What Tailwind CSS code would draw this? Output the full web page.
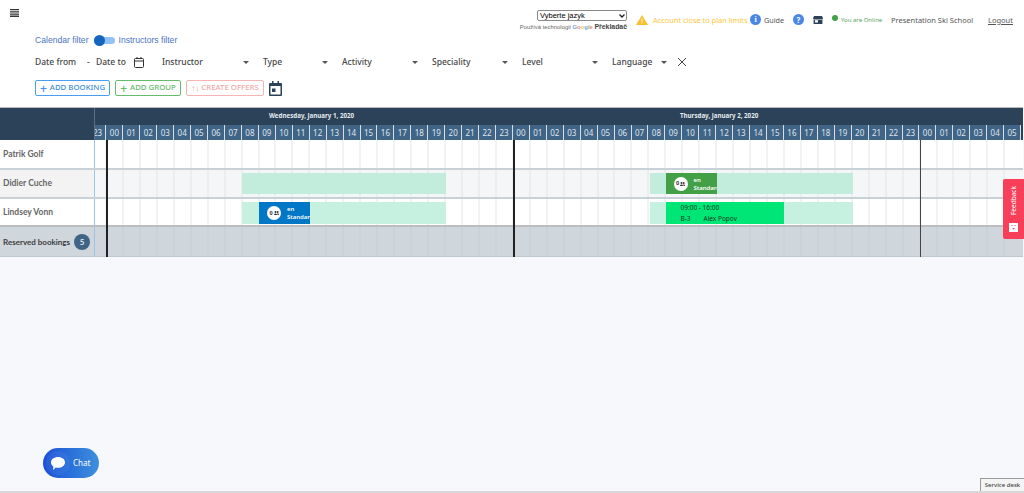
<!DOCTYPE html>
<html><head><meta charset="utf-8"><script src="https://cdn.jsdelivr.net/npm/@tailwindcss/browser@4"></script></head>
<body class="m-0 h-[493px] w-[1024px] overflow-hidden bg-[#f6f8fc] font-['Noto_Sans',sans-serif] relative">
<header class="h-[107px] bg-white flex flex-col">
  <div class="h-[33px] flex items-start justify-between">
    <svg class="ml-[10px] mt-[9px]" width="9" height="8" viewBox="0 0 9 8"><path d="M0 0h9v1.3H0zM0 2.2h9v1.3H0zM0 4.4h9v1.3H0zM0 6.6h9V8H0z" fill="#333"/></svg>
    <div class="flex items-start mr-[12px]">
      <div class="w-[90px] mt-[10px] flex flex-col items-end">
        <div class="relative w-[90px] h-[11px]">
          <select class="block w-[90px] h-[11px] p-0 pl-[2px] border border-[#8a8a8a] rounded-[2px] text-[7.500px] leading-[9px] text-black font-['Liberation_Sans',sans-serif] appearance-none bg-white"><option>Vyberte jazyk</option></select>
          <svg class="absolute right-[2px] top-[3.500px]" width="6" height="4" viewBox="0 0 6 4" fill="none" stroke="#222" stroke-width="1.300"><path d="M.5.500L3 3l2.500-2.500"/></svg>
        </div>
        <div class="text-[5.900px] leading-[8px] whitespace-nowrap font-['Liberation_Sans',sans-serif] text-[#666] mt-[2px]">Používá technologii <span class="font-bold text-[#7b9ee0]">G<span class="text-[#e58a80]">o</span><span class="text-[#eec35a]">o</span>g<span class="text-[#7cc08a]">l</span><span class="text-[#e58a80]">e</span></span> <span class="text-[#444] text-[6.900px] font-bold">Překladač</span></div>
      </div>
      <svg class="ml-[9px] mt-[15px]" width="12" height="10" viewBox="0 0 12 10"><path d="M6 0l6 10H0z" fill="#fbc02d"/><path d="M5.500 3.500h1v3h-1zM5.500 7.300h1v1h-1z" fill="#fff"/></svg>
      <span class="ml-[5px] mt-[14px] w-[93px] text-[7.400px] leading-[12px] text-[#fdc838] whitespace-nowrap">Account close to plan limits</span>
      <span class="ml-[4px] mt-[14px] w-[11px] h-[11px] rounded-full bg-[#4a86e8] text-white text-[8px] leading-[11px] font-bold text-center font-['Liberation_Serif',serif]">i</span>
      <span class="ml-[3px] mt-[14px] w-[20px] text-[7.200px] leading-[12px] text-[#555]">Guide</span>
      <span class="ml-[9px] mt-[14px] w-[11px] h-[11px] rounded-full bg-[#4a86e8] text-white text-[8px] leading-[11px] font-bold text-center">?</span>
      <svg class="ml-[9px] mt-[16px]" width="10" height="8" viewBox="0 0 10 8"><path d="M1 0h8l1 2.500a1.200 1.200 0 0 1-.6 1V8H.6V3.500A1.200 1.200 0 0 1 0 2.500z" fill="#2b4259"/><path d="M2 4.200h3V6.500H2z" fill="#fff"/><path d="M0 3.200h10v.5H0z" fill="#fff"/></svg>
      <span class="ml-[9px] mt-[15px] w-[6px] h-[6px] rounded-full bg-[#43a047]"></span>
      <span class="ml-[3px] mt-[15px] w-[42px] text-[6px] leading-[10px] text-[#5aa662] whitespace-nowrap">You are Online</span>
      <span class="ml-[8px] mt-[14px] w-[82px] text-[7.500px] leading-[12px] text-[#555] whitespace-nowrap">Presentation Ski School</span>
      <span class="ml-[15px] mt-[14px] w-[24px] text-[7.500px] leading-[12px] text-[#555] underline">Logout</span>
    </div>
  </div>
  <div class="h-[15px] pl-[35px] flex items-center text-[8.600px] text-[#4a75c4] font-['Liberation_Sans',sans-serif]">
    <span>Calendar filter</span>
    <span class="relative ml-[5px] w-[21px] h-[7px] rounded-full bg-[#90c2f5]"><span class="absolute left-0 top-[-2px] w-[11px] h-[11px] rounded-full bg-[#1565c0]"></span></span>
    <span class="ml-[4px]">Instructors filter</span>
  </div>
  <div class="h-[16px] mt-[6px] pl-[35px] flex items-center text-[8.500px] text-[#444] font-medium whitespace-nowrap">
    <span class="w-[52px]">Date from</span><span class="w-[9px]">-</span><span class="w-[38px]">Date to</span>
    <svg width="10" height="11" viewBox="0 0 10 11" fill="none" stroke="#333" stroke-width="1"><rect x=".5" y="1.500" width="9" height="9" rx="1"/><path d="M.5 4h9M3 0v2M7 0v2"/></svg>
    <span class="ml-[18px] w-[81px]">Instructor</span><svg width="6" height="3" viewBox="0 0 6 3"><path d="M0 0h6L3 3z" fill="#555"/></svg>
    <span class="ml-[14px] w-[59px]">Type</span><svg width="6" height="3" viewBox="0 0 6 3"><path d="M0 0h6L3 3z" fill="#555"/></svg>
    <span class="ml-[14px] w-[70px]">Activity</span><svg width="6" height="3" viewBox="0 0 6 3"><path d="M0 0h6L3 3z" fill="#555"/></svg>
    <span class="ml-[14px] w-[70px]">Speciality</span><svg width="6" height="3" viewBox="0 0 6 3"><path d="M0 0h6L3 3z" fill="#555"/></svg>
    <span class="ml-[14px] w-[70px]">Level</span><svg width="6" height="3" viewBox="0 0 6 3"><path d="M0 0h6L3 3z" fill="#555"/></svg>
    <span class="ml-[14px] w-[49px]">Language</span><svg width="6" height="3" viewBox="0 0 6 3"><path d="M0 0h6L3 3z" fill="#555"/></svg>
    <svg class="ml-[11px]" width="8" height="8" viewBox="0 0 8 8" stroke="#444" stroke-width="1"><path d="M0 0l8 8M8 0L0 8"/></svg>
  </div>
  <div class="mt-[10px] pl-[35px] flex items-center gap-[5px] text-[7.800px] font-medium whitespace-nowrap">
    <span class="w-[75px] h-[16px] border border-[#4a9ef0] rounded-[2px] text-[#3f8fe0] flex items-center justify-center gap-[3px]"><span class="text-[12px] leading-[11px]">+</span>ADD BOOKING</span>
    <span class="w-[66px] h-[16px] border border-[#66bb6a] rounded-[2px] text-[#66bb6a] flex items-center justify-center gap-[3px]"><span class="text-[12px] leading-[11px]">+</span>ADD GROUP</span>
    <span class="w-[78px] h-[16px] border border-[#f5b5b5] rounded-[2px] text-[#f3a8a8] flex items-center justify-center gap-[2px]"><span class="text-[8px] leading-[8px]">↑↓</span>CREATE OFFERS</span>
    <svg width="13" height="15" viewBox="0 0 13 15"><path d="M1 2h11a1 1 0 0 1 1 1v11a1 1 0 0 1-1 1H1a1 1 0 0 1-1-1V3a1 1 0 0 1 1-1z" fill="#2b4259"/><path d="M3 0h1.500v3H3zM8.500 0H10v3H8.500z" fill="#2b4259"/><path d="M1.500 5h10v8.500h-10z" fill="#fff"/><path d="M3 7.500h3.500V11H3z" fill="#2b4259"/></svg>
  </div>
</header>
<main class="relative w-[1023px] border-t border-[#bbb]">
  <div class="flex h-[32px]">
    <div class="w-[94px] shrink-0 bg-[#2b4259]"></div>
    <div class="flex-1 overflow-hidden border-l border-[#5a7185] flex flex-col bg-[#2b4259]">
      <div class="h-[17px] relative text-[6.200px] leading-[16px] font-bold text-[#e6ebef]">
        <span class="absolute left-[174px] whitespace-nowrap">Wednesday, January 1, 2020</span>
        <span class="absolute left-[585px] whitespace-nowrap">Thursday, January 2, 2020</span>
      </div>
      <div class="ml-[-5.500px] flex h-[15px] w-[950px] text-[8px] leading-[15px] text-[#dfe6ec] text-center">
        <span class="w-[16.950px] shrink-0 bg-[#406486] border-r border-[#d7dee4]">23</span><span class="w-[16.950px] shrink-0 bg-[#406486] border-r border-[#d7dee4]">00</span><span class="w-[16.950px] shrink-0 bg-[#406486] border-r border-[#d7dee4]">01</span><span class="w-[16.950px] shrink-0 bg-[#406486] border-r border-[#d7dee4]">02</span><span class="w-[16.950px] shrink-0 bg-[#406486] border-r border-[#d7dee4]">03</span><span class="w-[16.950px] shrink-0 bg-[#406486] border-r border-[#d7dee4]">04</span><span class="w-[16.950px] shrink-0 bg-[#406486] border-r border-[#d7dee4]">05</span><span class="w-[16.950px] shrink-0 bg-[#406486] border-r border-[#d7dee4]">06</span><span class="w-[16.950px] shrink-0 bg-[#406486] border-r border-[#d7dee4]">07</span><span class="w-[16.950px] shrink-0 bg-[#406486] border-r border-[#d7dee4]">08</span><span class="w-[16.950px] shrink-0 bg-[#406486] border-r border-[#d7dee4]">09</span><span class="w-[16.950px] shrink-0 bg-[#406486] border-r border-[#d7dee4]">10</span><span class="w-[16.950px] shrink-0 bg-[#406486] border-r border-[#d7dee4]">11</span><span class="w-[16.950px] shrink-0 bg-[#406486] border-r border-[#d7dee4]">12</span><span class="w-[16.950px] shrink-0 bg-[#406486] border-r border-[#d7dee4]">13</span><span class="w-[16.950px] shrink-0 bg-[#406486] border-r border-[#d7dee4]">14</span><span class="w-[16.950px] shrink-0 bg-[#406486] border-r border-[#d7dee4]">15</span><span class="w-[16.950px] shrink-0 bg-[#406486] border-r border-[#d7dee4]">16</span><span class="w-[16.950px] shrink-0 bg-[#406486] border-r border-[#d7dee4]">17</span><span class="w-[16.950px] shrink-0 bg-[#406486] border-r border-[#d7dee4]">18</span><span class="w-[16.950px] shrink-0 bg-[#406486] border-r border-[#d7dee4]">19</span><span class="w-[16.950px] shrink-0 bg-[#406486] border-r border-[#d7dee4]">20</span><span class="w-[16.950px] shrink-0 bg-[#406486] border-r border-[#d7dee4]">21</span><span class="w-[16.950px] shrink-0 bg-[#406486] border-r border-[#d7dee4]">22</span><span class="w-[16.950px] shrink-0 bg-[#406486] border-r border-[#d7dee4]">23</span><span class="w-[16.950px] shrink-0 bg-[#406486] border-r border-[#d7dee4]">00</span><span class="w-[16.950px] shrink-0 bg-[#406486] border-r border-[#d7dee4]">01</span><span class="w-[16.950px] shrink-0 bg-[#406486] border-r border-[#d7dee4]">02</span><span class="w-[16.950px] shrink-0 bg-[#406486] border-r border-[#d7dee4]">03</span><span class="w-[16.950px] shrink-0 bg-[#406486] border-r border-[#d7dee4]">04</span><span class="w-[16.950px] shrink-0 bg-[#406486] border-r border-[#d7dee4]">05</span><span class="w-[16.950px] shrink-0 bg-[#406486] border-r border-[#d7dee4]">06</span><span class="w-[16.950px] shrink-0 bg-[#406486] border-r border-[#d7dee4]">07</span><span class="w-[16.950px] shrink-0 bg-[#406486] border-r border-[#d7dee4]">08</span><span class="w-[16.950px] shrink-0 bg-[#406486] border-r border-[#d7dee4]">09</span><span class="w-[16.950px] shrink-0 bg-[#406486] border-r border-[#d7dee4]">10</span><span class="w-[16.950px] shrink-0 bg-[#406486] border-r border-[#d7dee4]">11</span><span class="w-[16.950px] shrink-0 bg-[#406486] border-r border-[#d7dee4]">12</span><span class="w-[16.950px] shrink-0 bg-[#406486] border-r border-[#d7dee4]">13</span><span class="w-[16.950px] shrink-0 bg-[#406486] border-r border-[#d7dee4]">14</span><span class="w-[16.950px] shrink-0 bg-[#406486] border-r border-[#d7dee4]">15</span><span class="w-[16.950px] shrink-0 bg-[#406486] border-r border-[#d7dee4]">16</span><span class="w-[16.950px] shrink-0 bg-[#406486] border-r border-[#d7dee4]">17</span><span class="w-[16.950px] shrink-0 bg-[#406486] border-r border-[#d7dee4]">18</span><span class="w-[16.950px] shrink-0 bg-[#406486] border-r border-[#d7dee4]">19</span><span class="w-[16.950px] shrink-0 bg-[#406486] border-r border-[#d7dee4]">20</span><span class="w-[16.950px] shrink-0 bg-[#406486] border-r border-[#d7dee4]">21</span><span class="w-[16.950px] shrink-0 bg-[#406486] border-r border-[#d7dee4]">22</span><span class="w-[16.950px] shrink-0 bg-[#406486] border-r border-[#d7dee4]">23</span><span class="w-[16.950px] shrink-0 bg-[#406486] border-r border-[#d7dee4]">00</span><span class="w-[16.950px] shrink-0 bg-[#406486] border-r border-[#d7dee4]">01</span><span class="w-[16.950px] shrink-0 bg-[#406486] border-r border-[#d7dee4]">02</span><span class="w-[16.950px] shrink-0 bg-[#406486] border-r border-[#d7dee4]">03</span><span class="w-[16.950px] shrink-0 bg-[#406486] border-r border-[#d7dee4]">04</span><span class="w-[16.950px] shrink-0 bg-[#406486] border-r border-[#d7dee4]">05</span>
      </div>
    </div>
  </div>
  <div class="flex h-[30px] bg-white border-b-2 border-[#c9d1d8]">
    <div class="w-[94px] shrink-0 pl-[3px] flex items-center text-[8.500px] text-[#666] font-['Lato',sans-serif] font-bold">Patrik Golf</div>
    <div class="flex-1 border-l border-[#9cc4e8] bg-[repeating-linear-gradient(90deg,transparent_0,transparent_15.950px,#e2e4e6_15.950px,#e2e4e6_16.950px)] bg-[position:-5.500px_0]"></div>
  </div>
  <div class="flex h-[29px] bg-[#f3f3f3] border-b-2 border-[#c9d1d8]">
    <div class="w-[94px] shrink-0 pl-[3px] flex items-center text-[8.500px] text-[#666] font-['Lato',sans-serif] font-bold">Didier Cuche</div>
    <div class="flex-1 relative border-l border-[#9cc4e8] bg-[#f5f6f8] bg-[repeating-linear-gradient(90deg,transparent_0,transparent_15.950px,#e2e4e6_15.950px,#e2e4e6_16.950px)] bg-[position:-5.500px_0]">
      <div class="absolute left-[146.500px] top-[3px] w-[204px] h-[21px] bg-[#c2eddc]"></div>
      <div class="absolute left-[554.500px] top-[3px] w-[203px] h-[21px] bg-[#c2eddc]"></div>
      <div class="absolute left-[570.500px] top-[3px] w-[51px] h-[21px] bg-[#43a047] flex items-center overflow-hidden text-white">
        <span class="ml-[8px] w-[14px] h-[14px] rounded-full bg-white shrink-0 text-[#333] text-[5.500px] font-bold flex items-center justify-center gap-[1px]">0<svg width="5" height="4" viewBox="0 0 5 4" fill="#333"><circle cx="1.500" cy="1" r="1"/><circle cx="3.700" cy="1" r=".9"/><path d="M0 4c0-2 3-2 3 0zM3.400 2.300c1 0 1.600.6 1.600 1.700H3.500z"/></svg></span>
        <span class="ml-[6px] text-[6px] leading-[8px] font-semibold whitespace-nowrap">en<br>Standard</span>
      </div>
    </div>
  </div>
  <div class="flex h-[28px] bg-white border-b-2 border-[#bdbdbd]">
    <div class="w-[94px] shrink-0 pl-[3px] flex items-center text-[8.500px] text-[#666] font-['Lato',sans-serif] font-bold">Lindsey Vonn</div>
    <div class="flex-1 relative border-l border-[#9cc4e8] bg-[repeating-linear-gradient(90deg,transparent_0,transparent_15.950px,#e2e4e6_15.950px,#e2e4e6_16.950px)] bg-[position:-5.500px_0]">
      <div class="absolute left-[146.500px] top-[3px] w-[204px] h-[22px] bg-[#c6f1e0]"></div>
      <div class="absolute left-[554.500px] top-[3px] w-[203px] h-[22px] bg-[#c6f1e0]"></div>
      <div class="absolute left-[164px] top-[3px] w-[51px] h-[22px] bg-[#0277c6] flex items-center overflow-hidden text-white">
        <span class="ml-[8px] w-[14px] h-[14px] rounded-full bg-white shrink-0 text-[#333] text-[5.500px] font-bold flex items-center justify-center gap-[1px]">0<svg width="5" height="4" viewBox="0 0 5 4" fill="#333"><circle cx="1.500" cy="1" r="1"/><circle cx="3.700" cy="1" r=".9"/><path d="M0 4c0-2 3-2 3 0zM3.400 2.300c1 0 1.600.6 1.600 1.700H3.500z"/></svg></span>
        <span class="ml-[6px] text-[6px] leading-[8px] font-semibold whitespace-nowrap">en<br>Standard</span>
      </div>
      <div class="absolute left-[570.500px] top-[3px] w-[118px] h-[22px] bg-[#00e676] text-[6.500px] leading-[11px] text-[#0b3a1e] pl-[15px]">
        <div>09:00 - 16:00</div>
        <div class="flex"><span class="w-[23px]">B-3</span><span>Alex Popov</span></div>
      </div>
    </div>
  </div>
  <div class="flex h-[30px] bg-[#cfd6dc] border-b border-[#bfc7ce]">
    <div class="w-[94px] shrink-0 pl-[3px] flex items-center gap-[4px] text-[8px] text-[#3c3c3c] font-['Lato',sans-serif] font-bold whitespace-nowrap">Reserved bookings<span class="w-[16px] h-[16px] rounded-full bg-[#406486] text-[#e6ebef] text-[8px] leading-[16px] text-center shrink-0">5</span></div>
    <div class="flex-1 border-l border-[#9cc4e8] bg-[repeating-linear-gradient(90deg,transparent_0,transparent_15.950px,#c6ced4_15.950px,#c6ced4_16.950px)] bg-[position:-5.500px_0]"></div>
  </div>
  <div class="absolute left-[106px] top-[32px] w-[1.500px] h-[117px] bg-[#222]"></div>
  <div class="absolute left-[513px] top-[32px] w-[1.500px] h-[117px] bg-[#222]"></div>
  <div class="absolute left-[919.500px] top-[32px] w-[1.500px] h-[117px] bg-[#444]"></div>
</main>
<div class="absolute right-0 top-[179px] w-[21px] h-[60px] bg-[#f73f5a] rounded-l-[2px] flex flex-col items-center text-white">
  <span class="mt-[4px] h-[36px] text-[6.500px] leading-[21px] [writing-mode:vertical-rl] rotate-180 text-center">Feedback</span>
  <svg class="mt-[4px]" width="9" height="9" viewBox="0 0 9 9"><path d="M0 0h9v9H0z" fill="#fff"/><path d="M2.500 2h1v1h-1zM5.500 2h1v1h-1zM3 5h3L4.500 6.500z" fill="#f73f5a"/></svg>
</div>
<div class="absolute left-[43px] top-[448px] w-[56px] h-[30px] rounded-full bg-linear-to-r from-[#1d4fd8] to-[#3f8fdc] flex items-center text-white text-[8px]">
  <span class="ml-[3px] w-[24px] h-[24px] rounded-full bg-white/5 flex items-center justify-center">
    <svg width="14" height="13" viewBox="0 0 14 13"><path d="M7 0c3.900 0 7 2.400 7 5.400s-3.100 5.400-7 5.400c-.8 0-1.500-.1-2.200-.3L2 13l.4-3.400C.9 8.600 0 7.100 0 5.400 0 2.400 3.100 0 7 0z" fill="#fff"/></svg>
  </span>
  <span class="ml-[3px]">Chat</span>
</div>
<div class="absolute right-0 top-[478px] w-[44px] h-[14px] bg-[#f4f4f4] border-t border-l border-[#999] text-[6px] leading-[13px] text-center text-[#444] font-medium">Service desk</div>
<div class="absolute left-0 bottom-0 w-full h-[2px] bg-[#d8d8d8]"></div>
</body></html>
